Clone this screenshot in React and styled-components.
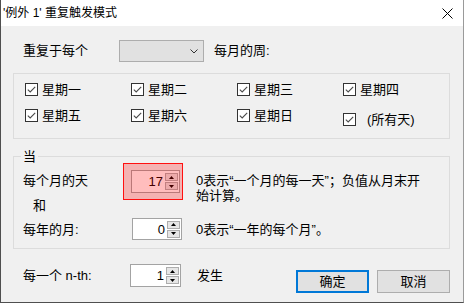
import React from "react";
import styled, { createGlobalStyle } from "styled-components";

const GlobalStyle = createGlobalStyle`
  html, body { margin: 0; padding: 0; background: #ffffff; }
  * { box-sizing: border-box; }
`;

const Window = styled.div`
  width: 464px;
  height: 303px;
  display: flex;
  flex-direction: column;
  background: #f0f0f0;
  border-left: 1px solid #4f4f4f;
  border-right: 1px solid #9a9a9a;
  border-bottom: 1px solid #4f4f4f;
  font-family: "Liberation Sans", "Noto Sans CJK SC", sans-serif;
  font-size: 13px;
  color: #000;
`;

const TitleBar = styled.div`
  height: 26px;
  flex: none;
  background: #ffffff;
  display: flex;
  align-items: center;
  justify-content: space-between;
  padding: 0 10px 0 2px;
`;

const TitleText = styled.span`
  font-size: 12px;
  line-height: 14px;
`;

const Body = styled.div`
  flex: 1;
  display: flex;
  flex-direction: column;
  padding: 14px 13px 0 12px;
`;

const TopRow = styled.div`
  display: flex;
  align-items: center;
  height: 22px;
  padding-left: 10px;
`;

const FieldLabel = styled.span`
  width: ${(p) => p.$w}px;
  flex: none;
  line-height: ${(p) => p.$lh || 15}px;
`;

const Dropdown = styled.div`
  width: 85px;
  height: 22px;
  background: #e1e1e1;
  border: 1px solid #adadad;
  display: flex;
  align-items: center;
  justify-content: flex-end;
  padding-right: 5px;
`;

const SideText = styled.span`
  margin-left: ${(p) => p.$ml}px;
  line-height: ${(p) => p.$lh || 15}px;
`;

const DaysBox = styled.div`
  margin-top: 11px;
  border: 1px solid #dcdcdc;
  padding: 9px 0 12px 11px;
  display: grid;
  grid-template-columns: repeat(4, 106px);
  row-gap: 13px;
`;

const CheckItem = styled.label`
  display: flex;
  align-items: center;
  height: 13px;
  margin-top: ${(p) => p.$drop || 0}px;
  line-height: 15px;
  white-space: nowrap;
`;

const CheckBox = styled.span`
  width: 13px;
  height: 13px;
  flex: none;
  border: 1px solid #333333;
  background: #ffffff;
  display: flex;
  align-items: center;
  justify-content: center;
  margin-right: ${(p) => p.$gap || 4}px;
`;

const WhenBox = styled.fieldset`
  margin: 11px 0 0 0;
  padding: 0 0 8px 9px;
  border: 1px solid #dcdcdc;
  min-width: 0;
`;

const Legend = styled.legend`
  padding: 0 2px;
  margin-left: -2px;
  line-height: 13px;
  font-size: 13px;
`;

const DayRow = styled.div`
  display: flex;
  align-items: flex-start;
`;

const LabelStack = styled.div`
  width: 100px;
  flex: none;
  padding-top: 10px;
  display: flex;
  flex-direction: column;
`;

const AndText = styled.span`
  margin: 10px 0 0 10px;
  line-height: 15px;
`;

const Highlight = styled.div`
  position: relative;
  width: 60px;
  height: 37px;
  flex: none;
  padding: 7px 0 0 8px;
  &::after {
    content: "";
    position: absolute;
    inset: 0;
    background: rgba(255, 0, 0, 0.26);
    border: 1px solid #ff1010;
    pointer-events: none;
  }
`;

const Desc = styled.div`
  margin-left: ${(p) => p.$ml}px;
  padding-top: ${(p) => p.$pt || 0}px;
  width: 232px;
  line-height: 15px;
`;

const MonthRow = styled.div`
  display: flex;
  align-items: center;
  margin-top: 5px;
`;

const SpinBox = styled.div`
  width: ${(p) => p.$w}px;
  height: ${(p) => p.$h}px;
  flex: none;
  display: flex;
  align-items: center;
  background: #ffffff;
  border: 1px solid #a3a3a3;
`;

const SpinValue = styled.span`
  flex: 1;
  text-align: right;
  padding-right: 2px;
  line-height: 15px;
`;

const SpinButtons = styled.div`
  width: 13px;
  height: 17px;
  margin-right: 1px;
  display: flex;
  flex-direction: column;
  gap: 1px;
`;

const SpinButton = styled.div`
  flex: 1;
  background: #e6e6e6;
  border: 1px solid #adadad;
  display: flex;
  align-items: center;
  justify-content: center;
`;

const BottomRow = styled.div`
  display: flex;
  align-items: flex-start;
  margin-top: 15px;
  padding-left: 10px;
`;

const Buttons = styled.div`
  margin-left: auto;
  margin-top: 6px;
  display: flex;
  gap: 8px;
`;

const DialogButton = styled.button`
  width: 73px;
  height: 23px;
  padding: 0;
  background: #e1e1e1;
  border: ${(p) => (p.$default ? "2px solid #0078d7" : "1px solid #adadad")};
  font-family: inherit;
  font-size: 13px;
  color: #000;
  line-height: 15px;
`;

const Check = () => (
  <svg width="11" height="11" viewBox="0 0 11 11">
    <path d="M1.8 5.6 L4.2 8 L9.2 2.8" fill="none" stroke="#4a4a4a" strokeWidth="1.1" />
  </svg>
);

const Arrow = ({ up }) => (
  <svg width="5" height="3" viewBox="0 0 5 3">
    <polygon points={up ? "0,3 5,3 2.5,0" : "0,0 5,0 2.5,3"} fill="#000" />
  </svg>
);

const Spin = ({ value, w, h }) => (
  <SpinBox $w={w} $h={h}>
    <SpinValue>{value}</SpinValue>
    <SpinButtons>
      <SpinButton>
        <Arrow up />
      </SpinButton>
      <SpinButton>
        <Arrow />
      </SpinButton>
    </SpinButtons>
  </SpinBox>
);

const days = ["星期一", "星期二", "星期三", "星期四", "星期五", "星期六", "星期日"];

export default function App() {
  return (
    <>
      <GlobalStyle />
      <Window>
        <TitleBar>
          <TitleText>'例外 1' 重复触发模式</TitleText>
          <svg width="11" height="11" viewBox="0 0 11 11">
            <path d="M0.5 0.5 L10.5 10.5 M10.5 0.5 L0.5 10.5" stroke="#000" strokeWidth="1" />
          </svg>
        </TitleBar>
        <Body>
          <TopRow>
            <FieldLabel $w={96} $lh={22}>重复于每个</FieldLabel>
            <Dropdown>
              <svg width="8" height="5" viewBox="0 0 8 5">
                <path d="M0.5 0.5 L4 4 L7.5 0.5" fill="none" stroke="#333" strokeWidth="1" />
              </svg>
            </Dropdown>
            <SideText $ml={10} $lh={22}>每月的周:</SideText>
          </TopRow>

          <DaysBox>
            {days.map((d) => (
              <CheckItem key={d}>
                <CheckBox>
                  <Check />
                </CheckBox>
                {d}
              </CheckItem>
            ))}
            <CheckItem $drop={4}>
              <CheckBox $gap={11}>
                <Check />
              </CheckBox>
              (所有天)
            </CheckItem>
          </DaysBox>

          <WhenBox>
            <Legend>当</Legend>
            <DayRow>
              <LabelStack>
                <FieldLabel $w={100}>每个月的天</FieldLabel>
                <AndText>和</AndText>
              </LabelStack>
              <Highlight>
                <Spin value="17" w={49} h={23} />
              </Highlight>
              <Desc $ml={13} $pt={10}>
                0表示“一个月的每一天”；负值从月末开始计算。
              </Desc>
            </DayRow>
            <MonthRow>
              <FieldLabel $w={109}>每年的月:</FieldLabel>
              <Spin value="0" w={50} h={22} />
              <Desc $ml={14}>0表示“一年的每个月”。</Desc>
            </MonthRow>
          </WhenBox>

          <BottomRow>
            <FieldLabel $w={107} $lh={23}>每一个 n-th:</FieldLabel>
            <Spin value="1" w={51} h={23} />
            <SideText $ml={16} $lh={23}>发生</SideText>
            <Buttons>
              <DialogButton $default>确定</DialogButton>
              <DialogButton>取消</DialogButton>
            </Buttons>
          </BottomRow>
        </Body>
      </Window>
    </>
  );
}
